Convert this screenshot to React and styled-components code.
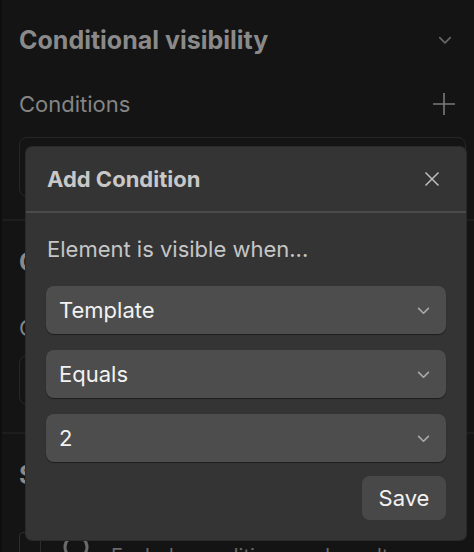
import React from 'react'
import styled, { createGlobalStyle } from 'styled-components'

const Global = createGlobalStyle`
  html, body { margin: 0; padding: 0; background: #131313; }
  body { font-family: Inter, "Noto Sans", sans-serif; -webkit-font-smoothing: antialiased; }
`

const Page = styled.div`
  position: relative;
  width: 474px;
  height: 552px;
  overflow: hidden;
  background: #141414;
  border-left: 2px solid #0e0e0e;
  box-sizing: border-box;
`

const Section = styled.section`
  padding: 0 8px 0 17px;
  border-bottom: ${p => (p.last ? 'none' : '2px solid #1d1d1d')};
  height: ${p => p.h}px;
  box-sizing: border-box;
`

const HeadRow = styled.div`
  display: flex;
  align-items: center;
  justify-content: space-between;
  height: ${p => p.h || 80}px;
  padding-right: ${p => p.pr || 14}px;
`

const Title = styled.h2`
  margin: 0;
  font-size: 25px;
  font-weight: 700;
  color: #8a8a8a;
`

const Label = styled.div`
  font-size: 22px;
  color: #858585;
`

const EmptyBox = styled.div`
  height: ${p => p.h || 60}px;
  border: 1px solid #262626;
  border-radius: 8px;
  margin-top: ${p => p.mt || 0}px;
  box-sizing: border-box;
`

const BottomRow = styled.div`
  display: flex;
  align-items: flex-start;
  gap: 20px;
  margin-top: 16px;
`

const Check = styled.div`
  width: 22px;
  height: 30px;
  border: 1px solid #2c2c2c;
  border-radius: 4px;
  box-sizing: border-box;
`

const Faint = styled.span`
  color: #6a6a6a;
  font-size: 20px;
  margin-top: 12px;
`

const Modal = styled.div`
  position: absolute;
  left: 24px;
  top: 147px;
  width: 440px;
  height: 393px;
  background: #343434;
  border-radius: 6px;
  box-shadow: 0 0 0 1px #2a2a2a;
  display: flex;
  flex-direction: column;
`

const ModalHead = styled.div`
  height: 64px;
  display: flex;
  align-items: center;
  justify-content: space-between;
  padding: 0 26px 0 21px;
  border-bottom: 2px solid #4a4a4a;
`

const ModalTitle = styled.h3`
  margin: 0;
  font-size: 22px;
  font-weight: 700;
  color: #c8c8c8;
`

const ModalBody = styled.div`
  padding: 19px 20px 0 20px;
  display: flex;
  flex-direction: column;
  gap: 16px;
`

const Lead = styled.p`
  margin: 0 0 4px 1px;
  font-size: 22px;
  color: #c6c6c6;
  line-height: 34px;
`

const Select = styled.div`
  height: 48px;
  background: #4d4d4d;
  border-radius: 8px;
  box-shadow: 0 1px 1px rgba(0, 0, 0, 0.45);
  display: flex;
  align-items: center;
  justify-content: space-between;
  padding: 0 16px 0 13px;
  font-size: 22px;
  color: #f2f2f2;
`

const Footer = styled.div`
  display: flex;
  justify-content: flex-end;
  margin-top: -2px;
`

const SaveButton = styled.button`
  height: 44px;
  width: 84px;
  border: none;
  border-radius: 8px;
  background: #484848;
  color: #f2f2f2;
  font-family: inherit;
  font-size: 22px;
`

const Chevron = ({ color = '#aaa', size = 13 }) => (
  <svg width={size} height={size} viewBox="0 0 12 12" fill="none">
    <path d="M1.5 4l4.5 4.5L10.5 4" stroke={color} strokeWidth="1.5" strokeLinecap="round" strokeLinejoin="round" />
  </svg>
)

const Plus = () => (
  <svg width="24" height="24" viewBox="0 0 24 24" fill="none">
    <path d="M12 1v22M1 12h22" stroke="#7a7a7a" strokeWidth="1.6" />
  </svg>
)

const Close = () => (
  <svg width="16" height="16" viewBox="0 0 16 16" fill="none">
    <path d="M1.5 1.5l13 13M14.5 1.5l-13 13" stroke="#bdbdbd" strokeWidth="1.5" />
  </svg>
)

const SearchIcon = () => (
  <svg width="30" height="30" viewBox="0 0 30 30" fill="none">
    <circle cx="15" cy="15" r="11" stroke="#6a6a6a" strokeWidth="3" />
  </svg>
)

export default function App() {
  const fields = ['Template', 'Equals', '2']
  return (
    <Page>
      <Global />
      <Section h={221}>
        <HeadRow h={80}>
          <Title>Conditional visibility</Title>
          <Chevron color="#666" size={14} />
        </HeadRow>
        <HeadRow h={48} pr={10}>
          <Label>Conditions</Label>
          <Plus />
        </HeadRow>
        <EmptyBox mt={9} />
      </Section>
      <Section h={213}>
        <HeadRow h={82}>
          <Title>Custom attributes</Title>
        </HeadRow>
        <HeadRow h={50}>
          <Label>Class name</Label>
        </HeadRow>
        <EmptyBox mt={2} h={50} />
      </Section>
      <Section h={200} last>
        <HeadRow h={82}>
          <Title>Search</Title>
        </HeadRow>
        <BottomRow>
          <Check />
          <SearchIcon />
          <Faint>Exclude conditions and results</Faint>
        </BottomRow>
      </Section>

      <Modal>
        <ModalHead>
          <ModalTitle>Add Condition</ModalTitle>
          <Close />
        </ModalHead>
        <ModalBody>
          <Lead>Element is visible when...</Lead>
          {fields.map(f => (
            <Select key={f}>
              <span>{f}</span>
              <Chevron />
            </Select>
          ))}
          <Footer>
            <SaveButton>Save</SaveButton>
          </Footer>
        </ModalBody>
      </Modal>
    </Page>
  )
}
